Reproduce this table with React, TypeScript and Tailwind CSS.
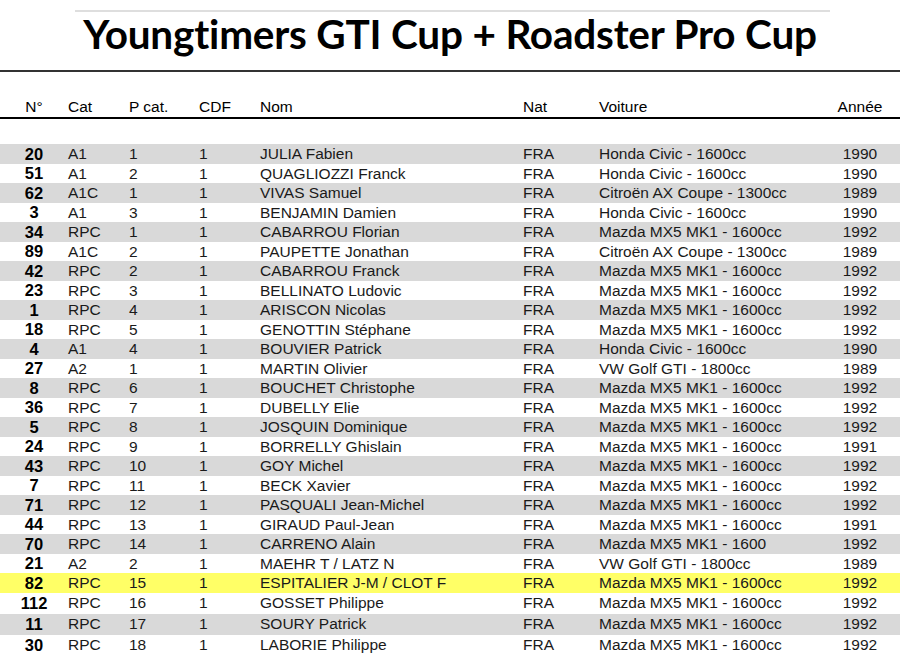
import React from 'react';

type Row = [string, string, string, string, string, string, string, string];

const rows: Row[] = [
  ['20', 'A1', '1', '1', 'JULIA Fabien', 'FRA', 'Honda Civic - 1600cc', '1990'],
  ['51', 'A1', '2', '1', 'QUAGLIOZZI Franck', 'FRA', 'Honda Civic - 1600cc', '1990'],
  ['62', 'A1C', '1', '1', 'VIVAS Samuel', 'FRA', 'Citroën AX Coupe - 1300cc', '1989'],
  ['3', 'A1', '3', '1', 'BENJAMIN Damien', 'FRA', 'Honda Civic - 1600cc', '1990'],
  ['34', 'RPC', '1', '1', 'CABARROU Florian', 'FRA', 'Mazda MX5 MK1 - 1600cc', '1992'],
  ['89', 'A1C', '2', '1', 'PAUPETTE Jonathan', 'FRA', 'Citroën AX Coupe - 1300cc', '1989'],
  ['42', 'RPC', '2', '1', 'CABARROU Franck', 'FRA', 'Mazda MX5 MK1 - 1600cc', '1992'],
  ['23', 'RPC', '3', '1', 'BELLINATO Ludovic', 'FRA', 'Mazda MX5 MK1 - 1600cc', '1992'],
  ['1', 'RPC', '4', '1', 'ARISCON Nicolas', 'FRA', 'Mazda MX5 MK1 - 1600cc', '1992'],
  ['18', 'RPC', '5', '1', 'GENOTTIN Stéphane', 'FRA', 'Mazda MX5 MK1 - 1600cc', '1992'],
  ['4', 'A1', '4', '1', 'BOUVIER Patrick', 'FRA', 'Honda Civic - 1600cc', '1990'],
  ['27', 'A2', '1', '1', 'MARTIN Olivier', 'FRA', 'VW Golf GTI - 1800cc', '1989'],
  ['8', 'RPC', '6', '1', 'BOUCHET Christophe', 'FRA', 'Mazda MX5 MK1 - 1600cc', '1992'],
  ['36', 'RPC', '7', '1', 'DUBELLY Elie', 'FRA', 'Mazda MX5 MK1 - 1600cc', '1992'],
  ['5', 'RPC', '8', '1', 'JOSQUIN Dominique', 'FRA', 'Mazda MX5 MK1 - 1600cc', '1992'],
  ['24', 'RPC', '9', '1', 'BORRELLY Ghislain', 'FRA', 'Mazda MX5 MK1 - 1600cc', '1991'],
  ['43', 'RPC', '10', '1', 'GOY Michel', 'FRA', 'Mazda MX5 MK1 - 1600cc', '1992'],
  ['7', 'RPC', '11', '1', 'BECK Xavier', 'FRA', 'Mazda MX5 MK1 - 1600cc', '1992'],
  ['71', 'RPC', '12', '1', 'PASQUALI Jean-Michel', 'FRA', 'Mazda MX5 MK1 - 1600cc', '1992'],
  ['44', 'RPC', '13', '1', 'GIRAUD Paul-Jean', 'FRA', 'Mazda MX5 MK1 - 1600cc', '1991'],
  ['70', 'RPC', '14', '1', 'CARRENO Alain', 'FRA', 'Mazda MX5 MK1 - 1600', '1992'],
  ['21', 'A2', '2', '1', 'MAEHR T / LATZ N', 'FRA', 'VW Golf GTI - 1800cc', '1989'],
  ['82', 'RPC', '15', '1', 'ESPITALIER J-M / CLOT F', 'FRA', 'Mazda MX5 MK1 - 1600cc', '1992'],
  ['112', 'RPC', '16', '1', 'GOSSET Philippe', 'FRA', 'Mazda MX5 MK1 - 1600cc', '1992'],
  ['11', 'RPC', '17', '1', 'SOURY Patrick', 'FRA', 'Mazda MX5 MK1 - 1600cc', '1992'],
  ['30', 'RPC', '18', '1', 'LABORIE Philippe', 'FRA', 'Mazda MX5 MK1 - 1600cc', '1992'],
];

const cols = 'grid grid-cols-[68px_61px_70px_61px_263px_76px_231px_60px]';

export default function App() {
  return (
    <div className="w-[900px] h-[660px] overflow-hidden bg-white text-[#1a1a1a] font-['Liberation_Sans',Arial,sans-serif]">
      {/* titre */}
      <div className="pt-[10px]">
        <div className="ml-[75px] w-[755px] h-[2px] bg-[#dedede]" />
      </div>
      <div className="h-[58px] pt-[2px] flex justify-center">
        <h1 className="font-['Lato',sans-serif] font-bold text-[40.5px] leading-none text-black tracking-[-0.2px]">
          Youngtimers GTI Cup + Roadster Pro Cup
        </h1>
      </div>
      <div className="h-[2px] bg-[#333]" />

      {/* en-tête */}
      <div className={`${cols} h-[45px] items-end pb-[3px] text-[15.5px] leading-none text-black`}>
        <div className="text-center">N°</div>
        <div>Cat</div>
        <div>P cat.</div>
        <div>CDF</div>
        <div>Nom</div>
        <div>Nat</div>
        <div>Voiture</div>
        <div className="text-center">Année</div>
      </div>
      <div className="h-[2px] bg-black" />
      <div className="h-[25px]" />

      {/* lignes */}
      {rows.map((r, i) => {
        const highlight = r[0] === '82';
        const late = i > 22;
        const bg = highlight ? 'bg-[#ffff66]' : i % 2 === 0 ? 'bg-[#d9d9d9]' : 'bg-white';
        return (
          <div
            key={r[0]}
            className={`${cols} ${bg} ${late ? 'h-[21px]' : 'h-[19.5px]'} items-center text-[15.5px] leading-none`}
          >
            <div className="text-center font-bold text-[16.5px] text-black">{r[0]}</div>
            <div>{r[1]}</div>
            <div>{r[2]}</div>
            <div>{r[3]}</div>
            <div>{r[4]}</div>
            <div>{r[5]}</div>
            <div>{r[6]}</div>
            <div className="text-center">{r[7]}</div>
          </div>
        );
      })}
    </div>
  );
}
